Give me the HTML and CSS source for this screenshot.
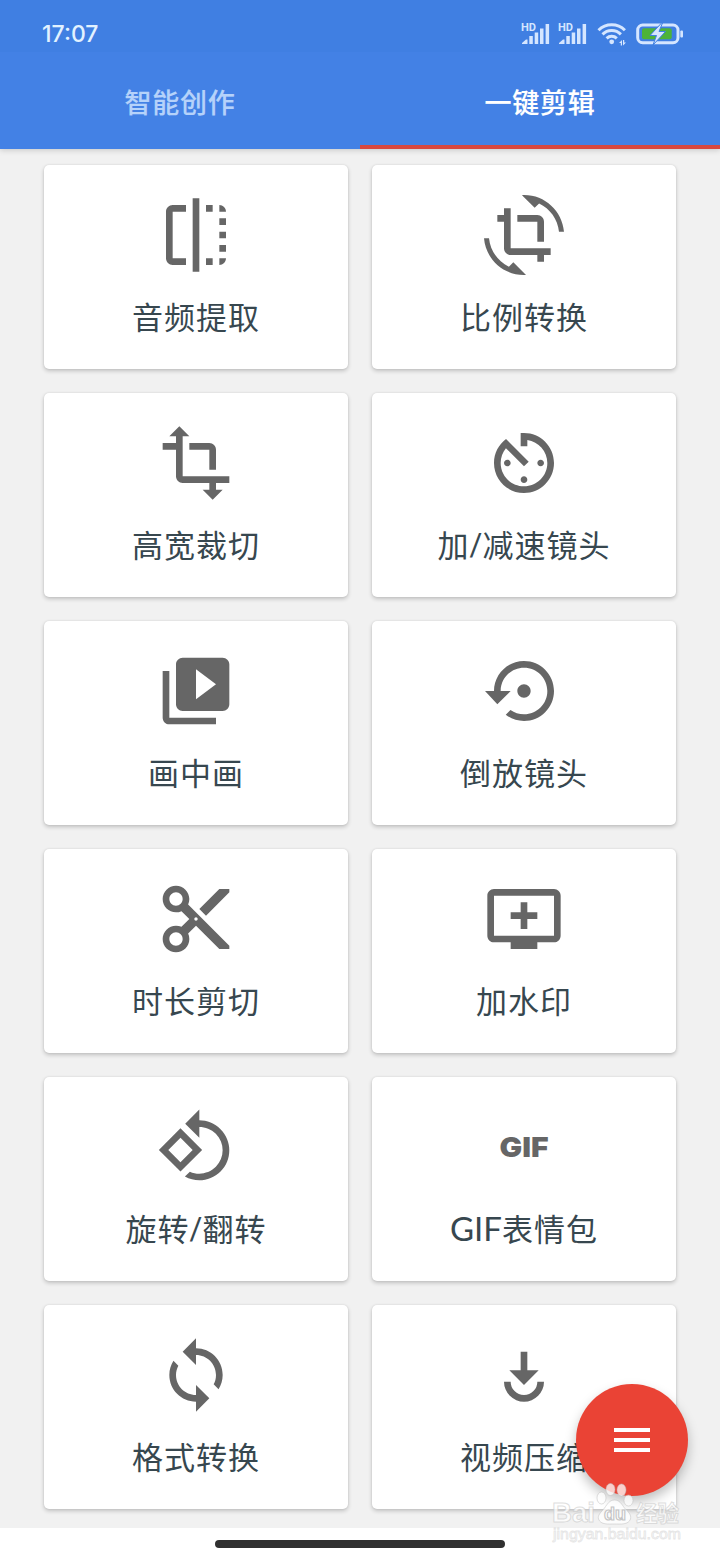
FILE: index.html
```html
<!DOCTYPE html>
<html lang="zh-CN">
<head>
<meta charset="utf-8">
<title>一键剪辑</title>
<link rel="stylesheet" href="styles.css">
</head>
<body>
<div class="screen">
  <header class="top">
    <div class="status">
      <span class="clock">17:07</span>
      <svg class="status-icons" viewBox="0 0 168 30" width="168" height="30">
        <g fill="#d5e6ff">
          <text class="hd" x="1" y="11.500" textLength="15" lengthAdjust="spacingAndGlyphs">HD</text>
          <path d="M2 25v-1l4-3.500h1.500v4.500zM9.300 17h3.500v8h-3.500zM14.700 13.500h3.500v11.500h-3.500zM20 9.500h3.500v15.500h-3.500zM25.600 5h3.500v20h-3.500z"/>
          <text class="hd" x="38" y="11.500" textLength="15" lengthAdjust="spacingAndGlyphs">HD</text>
          <path d="M39 25v-1l4-3.500h1.500v4.500zM46.300 17h3.500v8h-3.500zM51.700 13.500h3.500v11.500h-3.500zM57 9.500h3.500v15.500h-3.500zM62.600 5h3.500v20h-3.500z"/>
          <circle cx="91.700" cy="22.800" r="2.400"/>
          <path d="M99 24l3-3v5.500h-1.200v-2.500zM106 23.500l-3 3v-5.500h1.200v2.500z"/>
          <rect x="160.300" y="11.500" width="2.700" height="7" rx="1"/>
        </g>
        <g fill="none" stroke="#d5e6ff" stroke-width="3">
          <path d="M78.500 11.200a18.800 18.800 0 0 1 26.400 0M82.500 15.400a13 13 0 0 1 18.400 0M86.600 19.400a7.400 7.400 0 0 1 10.200 0"/>
          <rect x="117.700" y="6" width="40.300" height="17.700" rx="5"/>
        </g>
        <rect x="122" y="9.300" width="29.700" height="11" rx="2" fill="#4db338"/>
        <path d="M141.500 4l-11.500 12.500h6.500l-3.500 9.500 12.500-13.500h-6.500l3.500-8.500z" fill="#d5e6ff" stroke="#4080e2" stroke-width="1"/>
      </svg>
    </div>
    <nav class="tabs">
      <div class="tab">智能创作</div>
      <div class="tab tab-active">一键剪辑</div>
    </nav>
  </header>

  <main class="grid">
    <section class="card">
      <svg class="icon" viewBox="0 0 24 24"><path d="M15 21h2v-2h-2v2zm4-12h2V7h-2v2zM3 5v14c0 1.100.9 2 2 2h4v-2H5V5h4V3H5c-1.100 0-2 .9-2 2zm16-2v2h2c0-1.100-.9-2-2-2zm-8 20h2V1h-2v22zm8-6h2v-2h-2v2zM15 5h2V3h-2v2zm4 8h2v-2h-2v2zm0 8c1.100 0 2-.9 2-2h-2v2z"/></svg>
      <span class="label">音频提取</span>
    </section>
    <section class="card">
      <svg class="icon" viewBox="0 0 24 24"><path d="M7.470 21.490C4.200 19.930 1.860 16.760 1.500 13H0c.51 6.160 5.660 11 11.950 11 .23 0 .44-.02.66-.03L8.800 20.150l-1.330 1.340zM12.050 0c-.23 0-.44.02-.66.04l3.810 3.810 1.330-1.330C19.800 4.070 22.140 7.240 22.500 11H24c-.51-6.160-5.660-11-11.950-11zM16 14h2V8c0-1.110-.9-2-2-2h-6v2h6v6zm-8 2V4H6v2H4v2h2v8c0 1.100.89 2 2 2h8v2h2v-2h2v-2H8z"/></svg>
      <span class="label">比例转换</span>
    </section>
    <section class="card">
      <svg class="icon" viewBox="0 0 24 24"><path d="M22 18v-2H8V4h2L7 1 4 4h2v2H2v2h4v8c0 1.100.9 2 2 2h8v2h-2l3 3 3-3h-2v-2h4zM10 8h6v6h2V8c0-1.100-.9-2-2-2h-6v2z"/></svg>
      <span class="label">高宽裁切</span>
    </section>
    <section class="card">
      <svg class="icon" viewBox="0 0 24 24"><path d="M11 17c0 .55.45 1 1 1s1-.45 1-1-.45-1-1-1-1 .45-1 1zm0-14v4h2V5.080c3.390.49 6 3.390 6 6.920 0 3.870-3.130 7-7 7s-7-3.130-7-7c0-1.680.59-3.220 1.580-4.420L12 13l1.410-1.410-6.800-6.800v.02C4.420 6.450 3 9.050 3 12c0 4.970 4.020 9 9 9 4.970 0 9-4.030 9-9s-4.030-9-9-9h-1zm7 9c0-.55-.45-1-1-1s-1 .45-1 1 .45 1 1 1 1-.45 1-1zM6 12c0 .55.45 1 1 1s1-.45 1-1-.45-1-1-1-1 .45-1 1z"/></svg>
      <span class="label">加<span class="slash">/</span>减速镜头</span>
    </section>
    <section class="card">
      <svg class="icon" viewBox="0 0 24 24"><path d="M4 6H2v14c0 1.100.9 2 2 2h14v-2H4V6zm16-4H8c-1.100 0-2 .9-2 2v12c0 1.100.9 2 2 2h12c1.100 0 2-.9 2-2V4c0-1.100-.9-2-2-2zm-8 12.500v-9l6 4.500-6 4.500z"/></svg>
      <span class="label">画中画</span>
    </section>
    <section class="card">
      <svg class="icon" viewBox="0 0 24 24"><path d="M14 12c0-1.100-.9-2-2-2s-2 .9-2 2 .9 2 2 2 2-.9 2-2zm-2-9c-4.970 0-9 4.030-9 9H.3l3.700 4 4-4H5c0-3.870 3.130-7 7-7s7 3.130 7 7-3.130 7-7 7c-1.510 0-2.910-.49-4.060-1.300l-1.420 1.440C8.040 20.300 9.940 21 12 21c4.970 0 9-4.030 9-9s-4.030-9-9-9z"/></svg>
      <span class="label">倒放镜头</span>
    </section>
    <section class="card">
      <svg class="icon" viewBox="0 0 24 24"><path d="M9.640 7.640c.23-.5.36-1.050.36-1.640 0-2.210-1.790-4-4-4S2 3.790 2 6s1.790 4 4 4c.59 0 1.140-.13 1.640-.36L10 12l-2.360 2.360C7.140 14.130 6.590 14 6 14c-2.210 0-4 1.790-4 4s1.790 4 4 4 4-1.790 4-4c0-.59-.13-1.140-.36-1.640L12 14l7 7h3v-1L9.640 7.640zM6 8c-1.100 0-2-.89-2-2s.9-2 2-2 2 .89 2 2-.9 2-2 2zm0 12c-1.100 0-2-.89-2-2s.9-2 2-2 2 .89 2 2-.9 2-2 2zm6-7.500c-.28 0-.5-.22-.5-.5s.22-.5.5-.5.5.22.5.5-.22.5-.5.5zM19 3l-6 6 2 2 7-7V3z"/></svg>
      <span class="label">时长剪切</span>
    </section>
    <section class="card">
      <svg class="icon" viewBox="0 0 24 24"><path d="M21 3H3c-1.110 0-2 .89-2 2v12c0 1.100.89 2 2 2h5v2h8v-2h5c1.100 0 1.990-.9 1.990-2L23 5c0-1.110-.9-2-2-2zm0 14H3V5h18v12zm-5-7v2h-3v3h-2v-3H8v-2h3V7h2v3h3z"/></svg>
      <span class="label">加水印</span>
    </section>
    <section class="card">
      <svg class="icon" viewBox="0 0 24 24"><path d="M7.340 6.410L.86 12.900l6.490 6.480 6.490-6.480-6.500-6.490zM3.690 12.900l3.660-3.660L11 12.900l-3.660 3.660-3.650-3.660zm15.670-6.260C17.610 4.880 15.300 4 13 4V.76L8.760 5 13 9.240V6c1.790 0 3.580.68 4.950 2.050 2.730 2.730 2.730 7.170 0 9.900C16.580 19.320 14.790 20 13 20c-.97 0-1.940-.21-2.840-.61l-1.490 1.490C10.020 21.620 11.510 22 13 22c2.300 0 4.610-.88 6.360-2.640 3.520-3.510 3.520-9.210 0-12.720z"/></svg>
      <span class="label">旋转<span class="slash">/</span>翻转</span>
    </section>
    <section class="card">
      <svg class="icon" viewBox="0 0 80 80"><text class="gif" x="15.500" y="50" textLength="49" lengthAdjust="spacingAndGlyphs">GIF</text></svg>
      <span class="label"><span class="latin">GIF</span>表情包</span>
    </section>
    <section class="card">
      <svg class="icon" viewBox="0 0 24 24"><path d="M12 4V1L8 5l4 4V6c3.310 0 6 2.690 6 6 0 1.010-.25 1.970-.7 2.800l1.460 1.460C19.540 15.030 20 13.570 20 12c0-4.420-3.580-8-8-8zm0 14c-3.310 0-6-2.690-6-6 0-1.010.25-1.970.7-2.800L5.240 7.740C4.460 8.970 4 10.430 4 12c0 4.420 3.580 8 8 8v3l4-4-4-4v3z"/></svg>
      <span class="label">格式转换</span>
    </section>
    <section class="card">
      <svg class="icon" viewBox="0 0 24 24"><path d="M11 5h2v5.600h3.400L12 15l-4.400-4.400H11zM6 14a6 6 0 0 0 12 0h-2a4 4 0 0 1-8 0z"/></svg>
      <span class="label">视频压缩</span>
    </section>
  </main>

  <footer class="home"><div class="home-bar"></div></footer>

  <button class="fab" aria-label="菜单"><span class="line"></span><span class="line"></span><span class="line"></span></button>

  <svg class="watermark" viewBox="0 0 140 64" width="140" height="64">
    <g class="mark">
      <text x="1" y="40.500" font-size="27" textLength="43" lengthAdjust="spacingAndGlyphs">Bai</text>
      <ellipse cx="50.500" cy="17" rx="4.500" ry="6"/>
      <ellipse cx="59.500" cy="8.500" rx="4.500" ry="6"/>
      <ellipse cx="70.500" cy="9" rx="4.500" ry="6"/>
      <ellipse cx="77.500" cy="19.500" rx="4.500" ry="5.500"/>
      <path d="M63.500 19c-5 0-7 4-10 8-4 5-7 7-6 11 2 6 10 5 16 5s14 1 16-5c1-4-2-7-6-11-3-4-5-8-10-8z"/>
      <text x="85" y="40" font-size="22" textLength="43" lengthAdjust="spacingAndGlyphs">经验</text>
      <text class="mark-url" x="2" y="58" font-size="14" textLength="128" lengthAdjust="spacingAndGlyphs">jingyan.baidu.com</text>
    </g>
    <text class="mark-du" x="53" y="39" font-size="19" textLength="22" lengthAdjust="spacingAndGlyphs">du</text>
  </svg>
</div>
</body>
</html>
```
FILE: styles.css
```css
* {
  box-sizing: border-box;
}

body {
  margin: 0;
  background: #fff;
  font-family: "Noto Sans CJK SC", sans-serif;
}

.screen {
  position: relative;
  display: flex;
  flex-direction: column;
  width: 720px;
  height: 1560px;
  overflow: hidden;
}

.top {
  z-index: 1;
  display: flex;
  flex-direction: column;
  height: 149px;
  background: #4381e5;
  box-shadow: 0 1px 6px rgba(0, 0, 0, 0.18);
}

.status {
  display: flex;
  flex: none;
  justify-content: space-between;
  height: 52px;
  padding: 19px 32px 0 42px;
  background: #407fe2;
}

.clock {
  color: #e2f2ff;
  font: 500 23px/30px Inter, sans-serif;
}

.hd {
  font: 700 10px Roboto, sans-serif;
}

.tabs {
  display: grid;
  grid-template-columns: 1fr 1fr;
  height: 97px;
}

.tab {
  padding-top: 30px;
  border-bottom: 4px solid transparent;
  color: #b5d2fa;
  font-size: 27px;
  font-weight: 500;
  line-height: 40px;
  letter-spacing: 0.8px;
  text-align: center;
  -webkit-text-stroke: 0.2px currentColor;
}

.tab-active {
  border-bottom-color: #d8483f;
  color: #fff;
}

.grid {
  display: grid;
  grid-template-columns: 304px 304px;
  grid-auto-rows: 204px;
  gap: 24px;
  height: 1379px;
  padding: 16px 44px 0;
  background: #f1f1f1;
}

.card {
  display: flex;
  flex-direction: column;
  align-items: center;
  padding-top: 30px;
  border-radius: 5px;
  background: #fff;
  box-shadow: 0 2px 4px rgba(0, 0, 0, 0.2), 0 0 2px rgba(0, 0, 0, 0.1);
}

.icon {
  width: 80px;
  height: 80px;
  fill: #666;
}

.gif {
  font: 900 27.5px Inter, sans-serif;
}

.label {
  height: 46px;
  margin-top: 18px;
  color: #37474f;
  font-size: 31px;
  line-height: 46px;
  letter-spacing: 1px;
}

.slash {
  font-family: Roboto, sans-serif;
  line-height: 1;
  letter-spacing: 0;
  vertical-align: 2px;
}

.latin {
  font-family: Lato, sans-serif;
  font-size: 33px;
  line-height: 1;
  letter-spacing: 0;
}

.home {
  display: flex;
  justify-content: center;
  padding-top: 12px;
  background: #fff;
}

.home-bar {
  width: 290px;
  height: 8px;
  border-radius: 4px;
  background: #303030;
}

.fab {
  position: absolute;
  top: 1384px;
  left: 576px;
  display: flex;
  flex-direction: column;
  align-items: center;
  justify-content: center;
  gap: 6px;
  width: 112px;
  height: 112px;
  padding: 0;
  border: 0;
  border-radius: 50%;
  background: #ea4335;
  box-shadow: 0 6px 12px rgba(0, 0, 0, 0.25);
}

.line {
  width: 36px;
  height: 4px;
  background: #fff;
}

.watermark {
  position: absolute;
  top: 1481px;
  left: 551px;
}

.mark {
  fill: rgba(255, 255, 255, 0.75);
  stroke: rgba(190, 190, 190, 0.5);
  stroke-width: 1px;
  font-family: "Liberation Sans", "Noto Sans CJK SC", sans-serif;
  font-weight: 700;
}

.mark-url {
  stroke: rgba(190, 190, 190, 0.4);
  stroke-width: 0.8px;
  font-weight: 400;
}

.mark-du {
  fill: #fff;
  stroke: #c4c4c4;
  stroke-width: 1.2px;
  font-family: "Liberation Sans", sans-serif;
  font-weight: 700;
}
```
